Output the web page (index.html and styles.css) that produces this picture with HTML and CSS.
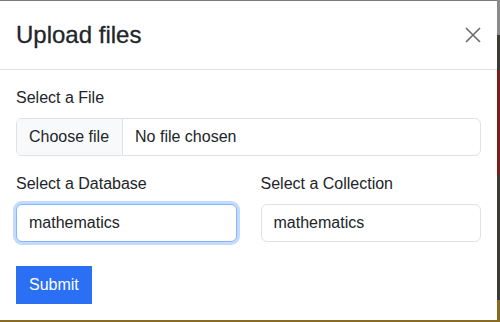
FILE: index.html
```html
<!DOCTYPE html>
<html lang="en">
<head>
    <meta charset="UTF-8">
    <meta name="viewport" content="width=device-width, initial-scale=1.0">
    <title>Upload files</title>
    <link rel="stylesheet" href="styles.css">
</head>
<body>
    <div class="modal">
        <div class="modal-header">
            <h4 class="modal-title">Upload files</h4>
            <button class="btn-close" aria-label="Close">
                <svg width="16" height="16" viewBox="0 0 16 16">
                    <path d="M1 1L15 15M15 1L1 15" stroke="#6b6b6b" stroke-width="1.6" fill="none"/>
                </svg>
            </button>
        </div>
        <form class="modal-body">
            <label class="form-label">Select a File</label>
            <div class="file-input">
                <span class="file-btn">Choose file</span>
                <span class="file-name">No file chosen</span>
            </div>

            <div class="form-row">
                <div class="form-col">
                    <label class="form-label">Select a Database</label>
                    <input class="form-control focused" type="text" value="mathematics">
                </div>
                <div class="form-col">
                    <label class="form-label">Select a Collection</label>
                    <input class="form-control" type="text" value="mathematics">
                </div>
            </div>

            <button type="button" class="btn-submit">Submit</button>
        </form>
    </div>
</body>
</html>
```

FILE: styles.css
```css
body {
    margin: 0;
    height: 322px;
    overflow: hidden;
    font-family: "Liberation Sans", Arial, sans-serif;
    color: #212529;
    background: linear-gradient(to bottom, #8a8a8a 0 35px, #3b3b33 35px 70px, #7a1d1d 70px 175px, #3b3b33 175px 300px, #8a6b22 300px);
}

.modal {
    width: 497px;
    height: 320px;
    box-sizing: border-box;
    background-color: #fff;
    border-top: 1px solid #7a7a7a;
}

.modal-header {
    height: 69px;
    box-sizing: border-box;
    padding: 0 16px;
    display: flex;
    align-items: center;
    justify-content: space-between;
    border-bottom: 1px solid #dee2e6;
}

.modal-title {
    margin: 0;
    font-size: 24px;
    font-weight: 500;
    line-height: 1.2;
    -webkit-text-stroke: 0.3px #212529;
}

.btn-close {
    border: 0;
    background: none;
    padding: 0;
    width: 16px;
    height: 16px;
}

.btn-close svg {
    display: block;
}

.modal-body {
    padding: 16px;
    margin: 0;
}

.form-label {
    display: block;
    font-size: 16px;
    line-height: 24px;
    margin-bottom: 8px;
}

.file-input {
    display: flex;
    height: 38px;
    box-sizing: border-box;
    border: 1px solid #dee2e6;
    border-radius: 6px;
    overflow: hidden;
    font-size: 16px;
    margin-bottom: 16px;
}

.file-btn {
    display: flex;
    align-items: center;
    padding: 0 13px 0 12px;
    background-color: #f8f9fa;
    border-right: 1px solid #dee2e6;
}

.file-name {
    display: flex;
    align-items: center;
    padding: 0 12px;
}

.form-row {
    display: grid;
    grid-template-columns: 1fr 1fr;
    column-gap: 24px;
    margin-bottom: 24px;
}

.form-control {
    display: block;
    width: 100%;
    height: 38px;
    box-sizing: border-box;
    padding: 0 12px;
    font-family: inherit;
    font-size: 16px;
    color: #212529;
    border: 1px solid #dee2e6;
    border-radius: 6px;
    outline: none;
}

.form-control.focused {
    border-color: #86b7fe;
    box-shadow: 0 0 0 3px rgba(13, 110, 253, 0.25);
}

.btn-submit {
    display: block;
    height: 38px;
    padding: 0 12px;
    font-family: inherit;
    font-size: 16px;
    color: #fff;
    background-color: #2b6ff5;
    border: 1px solid #2b6ff5;
    border-radius: 0;
}
```
